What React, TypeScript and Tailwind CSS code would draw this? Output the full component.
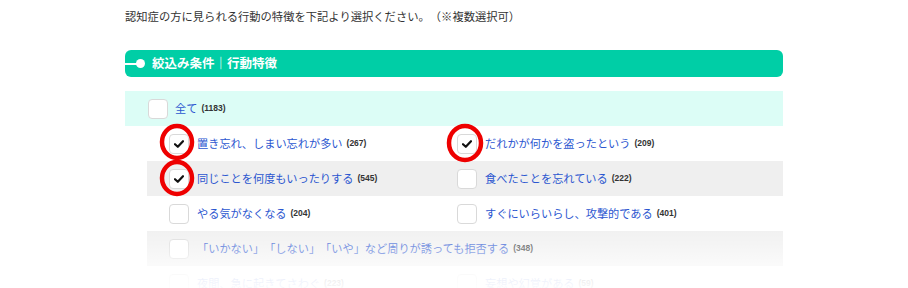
import React from "react";

const Check = () => (
  <svg width="10" height="8" viewBox="0 0 10 8" className="block">
    <path d="M1 4.2 L3.8 6.8 L9 1.2" fill="none" stroke="#111" strokeWidth="2.2" strokeLinecap="round" strokeLinejoin="round" />
  </svg>
);

const Box = ({ checked }: { checked?: boolean }) => (
  <div className="w-[20px] h-[20px] shrink-0 rounded-[4px] border border-[#d9d9d9] bg-white flex items-center justify-center">
    {checked && <Check />}
  </div>
);

const Item = ({ label, count, checked }: { label: string; count: string; checked?: boolean }) => (
  <div className="flex items-center pl-[22px] h-[35px]">
    <Box checked={checked} />
    <span className="ml-[8px] text-[11.2px] text-[#2b56d0] whitespace-nowrap">{label}</span>
    <span className="ml-[4px] text-[8.5px] font-bold text-[#333] font-['Liberation_Sans',sans-serif]">{count}</span>
  </div>
);

export default function App() {
  return (
    <div className="relative w-[908px] h-[288px] overflow-hidden bg-white font-['Noto_Sans_CJK_JP',sans-serif] [text-spacing-trim:space-all]">
      <div className="ml-[125px] w-[658px]">
        <p className="pt-[8px] text-[11.3px] leading-[16px] text-[#333]">
          認知症の方に見られる行動の特徴を下記より選択ください。（※複数選択可）
        </p>
        <div className="mt-[26px] h-[27px] rounded-[6px] bg-[#00cea6] flex items-center">
          <div className="w-[12px] h-[2px] bg-white" />
          <div className="w-[9px] h-[9px] rounded-full bg-white -ml-[1px]" />
          <span className="ml-[7px] text-[12.5px] font-bold text-white">絞込み条件｜行動特徴</span>
        </div>
        <div className="mt-[14px] h-[35px] bg-[#dcfdf6] flex items-center pl-[23px]">
          <Box />
          <span className="ml-[7px] text-[11.2px] text-[#2b56d0]">全て</span>
          <span className="ml-[4px] text-[8.5px] font-bold text-[#333] font-['Liberation_Sans',sans-serif]">(1183)</span>
        </div>
        <div className="ml-[22px] grid grid-cols-[288px_1fr]">
          <Item label="置き忘れ、しまい忘れが多い" count="(267)" checked />
          <Item label="だれかが何かを盗ったという" count="(209)" checked />
          <div className="col-span-2 grid grid-cols-[288px_1fr] bg-[#efefef]">
            <Item label="同じことを何度もいったりする" count="(545)" checked />
            <Item label="食べたことを忘れている" count="(222)" />
          </div>
          <Item label="やる気がなくなる" count="(204)" />
          <Item label="すぐにいらいらし、攻撃的である" count="(401)" />
          <div className="col-span-2 bg-[#efefef]">
            <Item label="「いかない」「しない」「いや」など周りが誘っても拒否する" count="(348)" />
          </div>
          <Item label="夜間、急に起きてさわぐ" count="(223)" />
          <Item label="妄想や幻覚がある" count="(59)" />
        </div>
      </div>

      <div className="absolute left-0 right-0 top-[222px] h-[66px] bg-[linear-gradient(to_bottom,rgba(255,255,255,0)_0%,rgba(255,255,255,0.35)_35%,rgba(255,255,255,0.9)_82%,rgba(255,255,255,0.96)_100%)]" />

      <svg className="absolute left-0 top-0 pointer-events-none" width="908" height="288">
        <ellipse cx="177" cy="142" rx="15" ry="16" fill="none" stroke="#ee0000" strokeWidth="4.5" />
        <ellipse cx="177" cy="178" rx="15" ry="16" fill="none" stroke="#ee0000" strokeWidth="4.5" />
        <ellipse cx="465" cy="143" rx="16" ry="17" fill="none" stroke="#ee0000" strokeWidth="4.5" />
      </svg>
    </div>
  );
}
